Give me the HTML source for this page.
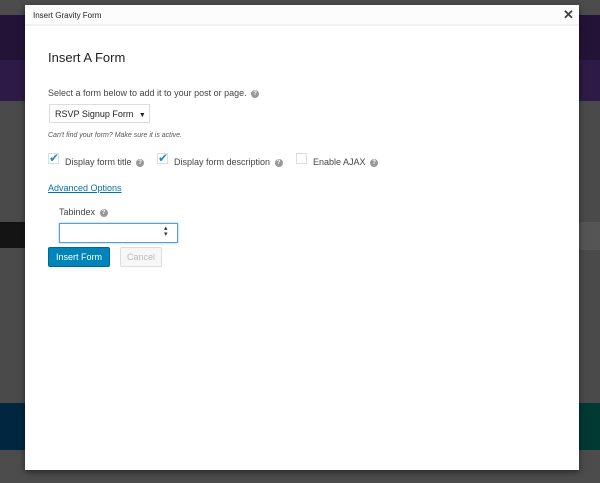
<!DOCTYPE html>
<html><head><style>
*{margin:0;padding:0;box-sizing:border-box}
body{width:600px;height:483px;overflow:hidden;background:#4c4c4c;position:relative;font-family:"Liberation Sans",sans-serif}
.a{position:absolute}
.q{display:inline-block;width:8px;height:8px;border-radius:50%;background:#999;color:#fff;font-size:6px;line-height:8px;text-align:center;font-weight:bold;vertical-align:middle;margin-left:2px}
.cb{position:absolute;width:11px;height:11px;border:1px solid #ddd;background:#fff}
.ck{position:absolute;color:#1e8cbe;font-size:12px;line-height:12px}
.t{font-size:9px;color:#444;position:absolute;white-space:nowrap}
</style></head><body>
<div class="a" style="left:0;top:15px;width:600px;height:45px;background:#231437"></div>
<div class="a" style="left:0;top:60px;width:600px;height:41px;background:#2e1a46"></div>
<div class="a" style="left:0;top:101px;width:600px;height:302px;background:#4a4a4a"></div>
<div class="a" style="left:0;top:222px;width:25px;height:26px;background:#141414"></div>
<div class="a" style="left:578px;top:222px;width:22px;height:28px;background:#555"></div>
<div class="a" style="left:0;top:403px;width:600px;height:47px;background:#012640"></div>
<div class="a" style="left:560px;top:403px;width:40px;height:47px;background:#003a33"></div>
<div class="a" style="left:25px;top:5px;width:554px;height:465px;background:#fff;box-shadow:0 2px 6px rgba(0,0,0,.5)">
 <div class="a" style="left:0;top:0;width:554px;height:21px;background:#fcfcfc;border-bottom:2px solid #f1f1f1"></div>
 <div class="a" style="left:8px;top:6px;font-size:8px;color:#222">Insert Gravity Form</div>
 <div class="a" style="left:538px;top:2px;font-size:13px;font-weight:bold;color:#444">✕</div>
</div>
<div class="a" style="left:48px;top:50px;font-size:13px;color:#222">Insert A Form</div>
<div class="t" style="left:48px;top:88px">Select a form below to add it to your post or page. <span class="q">?</span></div>
<div class="a" style="left:49px;top:104px;width:101px;height:19px;border:1px solid #ddd;font-size:9px;color:#222;padding:4px 0 0 5px">RSVP Signup Form <span style="font-size:7px;margin-left:3px">▼</span></div>
<div class="a" style="left:48px;top:132px;font-size:7px;font-style:italic;color:#555">Can't find your form? Make sure it is active.</div>
<div class="cb" style="left:48px;top:153px"></div><div class="ck" style="left:49px;top:152px">✔</div>
<div class="t" style="left:65px;top:157px">Display form title <span class="q">?</span></div>
<div class="cb" style="left:157px;top:153px"></div><div class="ck" style="left:158px;top:152px">✔</div>
<div class="t" style="left:174px;top:157px">Display form description <span class="q">?</span></div>
<div class="cb" style="left:296px;top:153px"></div>
<div class="t" style="left:313px;top:157px">Enable AJAX <span class="q">?</span></div>
<div class="a" style="left:48px;top:183px;font-size:9px;color:#0073aa;text-decoration:underline">Advanced Options</div>
<div class="t" style="left:59px;top:207px">Tabindex <span class="q">?</span></div>
<div class="a" style="left:59px;top:223px;width:119px;height:20px;border:1px solid #5b9dd9;box-shadow:0 0 2px rgba(30,140,190,.6)"></div>
<div class="a" style="left:164px;top:226px;font-size:7px;line-height:6px;color:#333">▴<br>▾</div>
<div class="a" style="left:48px;top:247px;width:62px;height:20px;background:#0085ba;border:1px solid #006799;border-radius:2px;color:#fff;font-size:9px;text-align:center;line-height:18px">Insert Form</div>
<div class="a" style="left:120px;top:247px;width:42px;height:20px;background:#f7f7f7;border:1px solid #ddd;border-radius:2px;color:#bbb;font-size:9px;text-align:center;line-height:18px">Cancel</div>
</body></html>
